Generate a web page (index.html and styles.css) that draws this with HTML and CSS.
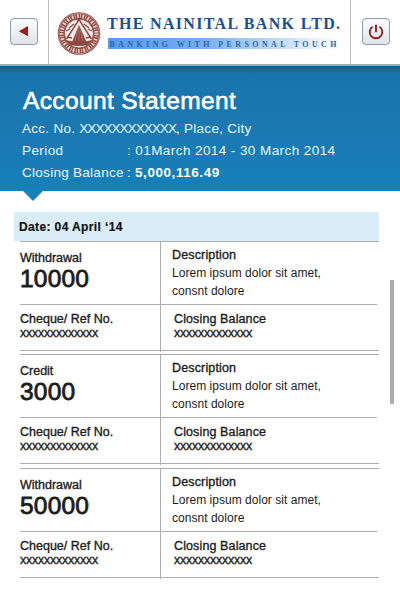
FILE: index.html
```html
<!DOCTYPE html>
<html lang="en">
<head>
<meta charset="utf-8">
<title>Account Statement</title>
<link rel="stylesheet" href="styles.css">
</head>
<body>
<header class="topbar">
  <div class="side left"><button class="btn" aria-label="Back"><svg width="26" height="25" viewBox="0 0 26 25"><path d="M7.800 12.200L17 7.100V17.300Z" fill="#a01c1c"/></svg></button></div>
  <svg class="brand" width="301" height="64" viewBox="49 0 301 64">
    <defs>
      <linearGradient id="tag" x1="0" x2="1"><stop offset="0" stop-color="#559bec"/><stop offset=".4" stop-color="#74aef2"/><stop offset="1" stop-color="#fff"/></linearGradient>
    </defs>
    <circle cx="79" cy="33.500" r="21.300" fill="#8f4742"/>
    <circle cx="79" cy="33.500" r="17.400" fill="none" stroke="#ecd5cf" stroke-width="3.800" stroke-dasharray="1.700 1.300 .8 1.500"/>
    <circle cx="79" cy="33.500" r="20.200" fill="none" stroke="#d9b6af" stroke-width=".6"/>
    <circle cx="79" cy="33.500" r="14.500" fill="#f8ece8" stroke="#8f4742" stroke-width=".9"/>
    <path d="M79 19.500L66.500 39M79 19.500L91.500 39" stroke="#8f4742" stroke-width="1.400"/>
    <path d="M79 25L72 42H86.500Z" fill="#8f4742"/>
    <path d="M69 28l5-4M89 28l-5-4M66 31l4-2M92 31l-4-2M67 37l5 1M91 37l-5 1" stroke="#8f4742" stroke-width="1.300"/>
    <path d="M77.500 30l-2.500 11M80.500 30l2.500 11M79 27v14" stroke="#c08880" stroke-width=".6"/>
    <path d="M66 40q13 4 26 0l-4 5q-9 2-18 0Z" fill="#8f4742"/>
    <rect x="108" y="38" width="232" height="11" fill="url(#tag)"/>
    <text class="name" x="107" y="29" textLength="233">THE NAINITAL BANK LTD.</text>
    <text class="tagline" x="109.500" y="46.500" textLength="227">BANKING WITH PERSONAL TOUCH</text>
  </svg>
  <div class="side right"><button class="btn" aria-label="Log out"><svg width="26" height="25" viewBox="0 0 26 25"><path d="M9.600 7.700a6.300 6.300 0 1 0 6.800 0M13 5.800v7.500" fill="none" stroke="#8e2024" stroke-width="1.900"/></svg></button></div>
</header>
<section class="summary">
  <h1>Account Statement</h1>
  <div class="line">Acc. No. <span class="mask">XXXXXXXXXXXX</span>, Place, City</div>
  <div class="line period"><span class="key">Period</span>: 01March 2014 - 30 March 2014</div>
  <div class="line closing"><span class="key">Closing Balance</span>: <b>5,000,116.49</b></div>
</section>
<main>
  <div class="date">Date: 04 April ‘14</div>
  <article class="entry">
    <div class="row top">
      <div class="cell kind">Withdrawal<strong>10000</strong></div>
      <div class="cell desc"><h2>Description</h2>Lorem ipsum dolor sit amet,<br>consnt dolore</div>
    </div>
    <div class="row bottom">
      <div class="cell ref">Cheque/ Ref No.<span class="x">xxxxxxxxxxxxx</span></div>
      <div class="cell bal">Closing Balance<span class="x">xxxxxxxxxxxxx</span></div>
    </div>
  </article>
  <article class="entry">
    <div class="row top">
      <div class="cell kind">Credit<strong>3000</strong></div>
      <div class="cell desc"><h2>Description</h2>Lorem ipsum dolor sit amet,<br>consnt dolore</div>
    </div>
    <div class="row bottom">
      <div class="cell ref">Cheque/ Ref No.<span class="x">xxxxxxxxxxxxx</span></div>
      <div class="cell bal">Closing Balance<span class="x">xxxxxxxxxxxxx</span></div>
    </div>
  </article>
  <article class="entry">
    <div class="row top">
      <div class="cell kind">Withdrawal<strong>50000</strong></div>
      <div class="cell desc"><h2>Description</h2>Lorem ipsum dolor sit amet,<br>consnt dolore</div>
    </div>
    <div class="row bottom">
      <div class="cell ref">Cheque/ Ref No.<span class="x">xxxxxxxxxxxxx</span></div>
      <div class="cell bal">Closing Balance<span class="x">xxxxxxxxxxxxx</span></div>
    </div>
  </article>
</main>
<div class="scroll"></div>
</body>
</html>
```
FILE: styles.css
```css
* { box-sizing: border-box; }
body {
  margin: 0;
  width: 400px;
  height: 600px;
  overflow: hidden;
  position: relative;
  background: #fff;
  color: #1c1c1c;
  font-family: "Liberation Sans", Arial, sans-serif;
  white-space: nowrap;
}
.topbar { display: flex; height: 66px; border-bottom: 2px solid #a9abb0; }
.brand { display: block; flex: 1; }
.side { width: 49px; padding-top: 18px; }
.left { border-right: 1px solid #bdbdbd; padding-left: 10px; }
.right { width: 50px; border-left: 1px solid #bdbdbd; padding-left: 11px; }
.btn {
  display: block;
  width: 28px;
  height: 27px;
  padding: 0;
  border: 1px solid #8f9aa6;
  border-radius: 4px;
  background: linear-gradient(#fbfcfd, #dfe4ea);
}
.btn svg { display: block; }
.name { font: bold 16px "Liberation Serif", serif; fill: #1b4f8c; }
.tagline { font: bold 8px "Liberation Serif", serif; fill: #2f66a5; }
.summary {
  position: relative;
  height: 125px;
  padding: 20px 0 0 22px;
  color: #e9f6fd;
  background: linear-gradient(#10608f 0, #1a74ab 8px, #1c78b1 45%, #1680b8 100%);
}
.summary::after {
  content: "";
  position: absolute;
  left: 23px;
  top: 125px;
  border: 10px solid transparent;
  border-top-color: #1d7fb5;
  border-bottom: 0;
}
h1 {
  margin: 0 0 2px 1px;
  font-size: 24.5px;
  line-height: 30px;
  font-weight: normal;
  letter-spacing: .36px;
  color: #fff;
  -webkit-text-stroke: .6px #fff;
}
.line { font-size: 13.5px; line-height: 22px; letter-spacing: .28px; }
.period { letter-spacing: .42px; }
.closing { letter-spacing: .28px; }
.key { display: inline-block; width: 105px; }
.mask { letter-spacing: -.95px; }
.line b { color: #fff; letter-spacing: .55px; }
main { margin: 21px 21px 0 14px; }
.date {
  height: 29px;
  padding-left: 5px;
  background: #d8edf8;
  color: #111;
  font-size: 12px;
  font-weight: bold;
  line-height: 30px;
  letter-spacing: .38px;
  -webkit-text-stroke: .2px;
}
.entry {
  margin: 0 0 3px 6px;
  border-top: 1px solid #adadad;
  border-bottom: 1px solid #adadad;
}
.entry:nth-of-type(2) { margin-bottom: 4px; }
.row { display: grid; grid-template-columns: 141px 1fr; }
.top { height: 63px; border-bottom: 1px solid #adadad; margin-right: 2px; }
.bottom { height: 45px; }
.cell { font-size: 12.5px; line-height: 15px; -webkit-text-stroke: .35px; }
.kind, .ref { border-right: 1px solid #adadad; }
.kind { padding-top: 9px; }
.ref { height: 47px; padding-top: 7px; }
strong {
  display: block;
  font-size: 24.5px;
  font-weight: normal;
  line-height: 25px;
  letter-spacing: .2px;
  -webkit-text-stroke: .8px;
}
.desc {
  padding: 4px 0 0 11px;
  font-size: 12px;
  line-height: 18px;
  letter-spacing: .03px;
  -webkit-text-stroke: 0;
}
h2 {
  margin: 0;
  font-size: 12.5px;
  font-weight: normal;
  line-height: 18px;
  letter-spacing: .15px;
  -webkit-text-stroke: .35px;
}
.bal { padding: 7px 0 0 13px; letter-spacing: .12px; }
.x { display: block; line-height: 13px; letter-spacing: -.25px; }
.scroll {
  position: absolute;
  left: 390px;
  top: 280px;
  width: 4px;
  height: 124px;
  background: #ababab;
}
```
